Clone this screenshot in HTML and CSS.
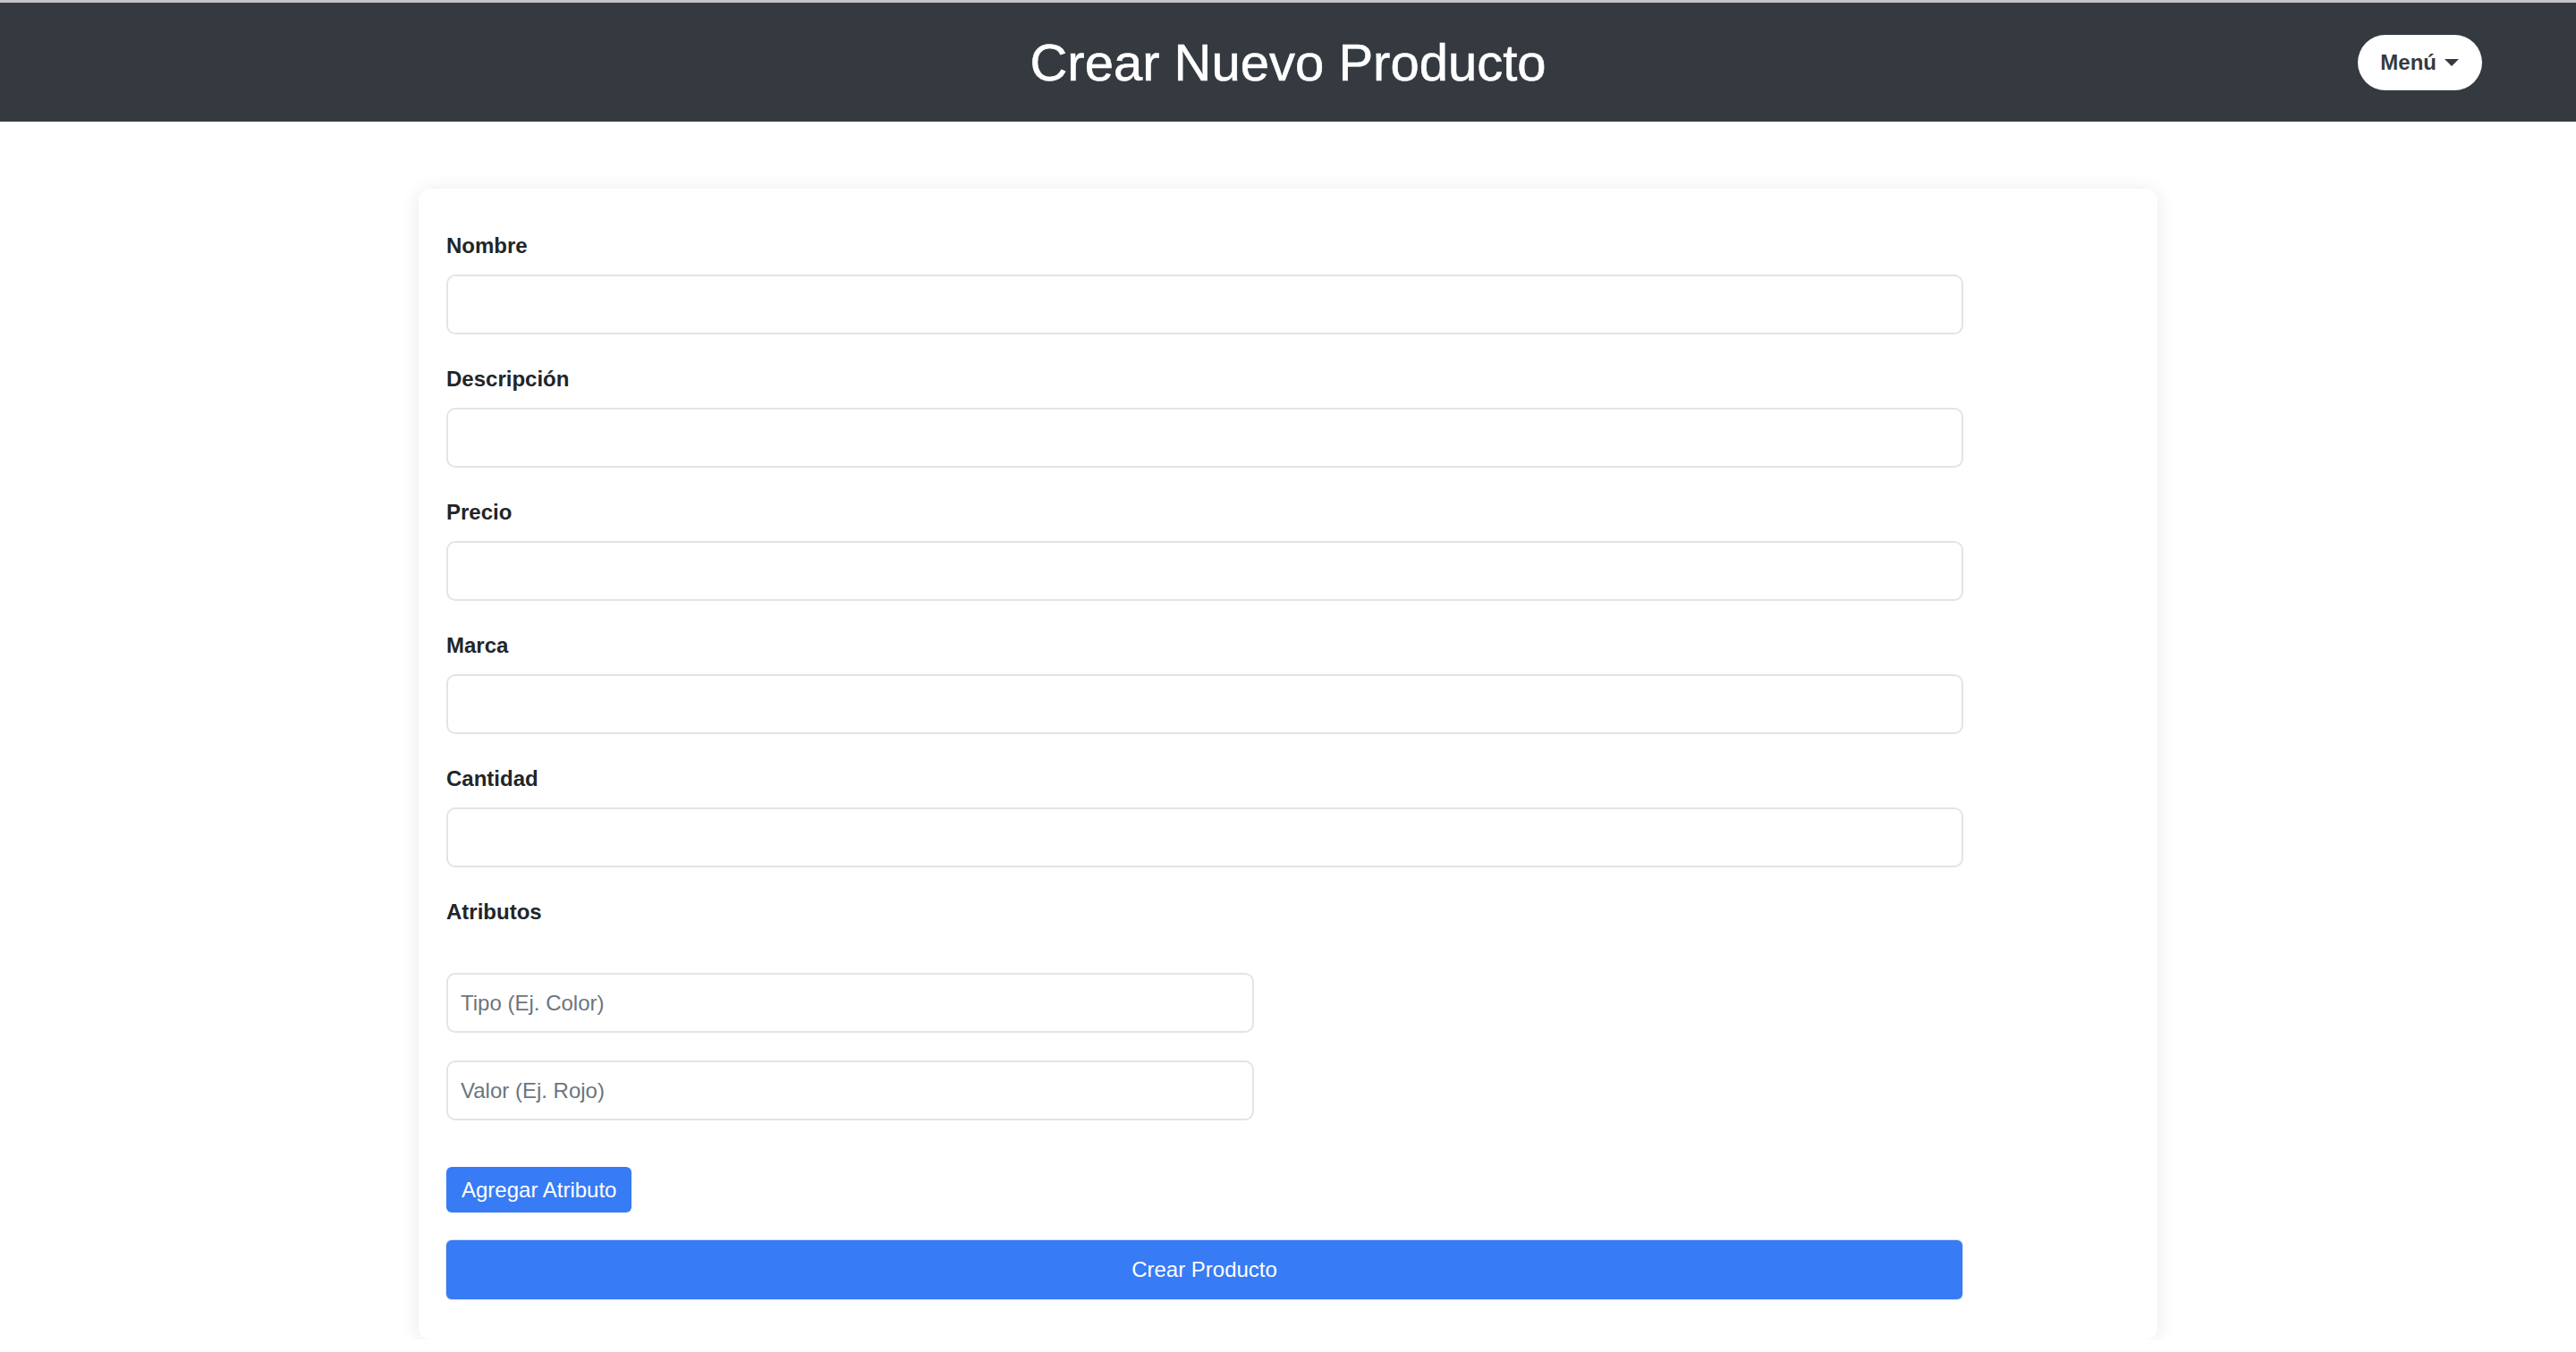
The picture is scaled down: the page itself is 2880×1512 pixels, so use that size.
FILE: index.html
```html
<!DOCTYPE html>
<html lang="es">
<head>
<meta charset="utf-8">
<title>Crear Nuevo Producto</title>
<link rel="stylesheet" href="styles.css">
</head>
<body>
<header class="topbar">
  <div class="topbar-spacer"></div>
  <h1 class="topbar-title">Crear Nuevo Producto</h1>
  <div class="topbar-actions">
    <button class="menu-btn" type="button">Menú<span class="caret"></span></button>
  </div>
</header>
<main class="page">
  <form class="card">
    <div class="form-body">
      <div class="field">
        <label class="field-label">Nombre</label>
        <input class="input" type="text">
      </div>
      <div class="field">
        <label class="field-label">Descripción</label>
        <input class="input" type="text">
      </div>
      <div class="field">
        <label class="field-label">Precio</label>
        <input class="input" type="text">
      </div>
      <div class="field">
        <label class="field-label">Marca</label>
        <input class="input" type="text">
      </div>
      <div class="field">
        <label class="field-label">Cantidad</label>
        <input class="input" type="text">
      </div>
      <div class="attrs">
        <label class="field-label attrs-label">Atributos</label>
        <div class="attr-list">
          <input class="input attr-input" type="text" placeholder="Tipo (Ej. Color)">
          <input class="input attr-input" type="text" placeholder="Valor (Ej. Rojo)">
        </div>
      </div>
      <button class="btn btn-add" type="button">Agregar Atributo</button>
      <button class="btn btn-submit" type="submit">Crear Producto</button>
    </div>
  </form>
</main>
</body>
</html>
```

FILE: styles.css
```css
* {
  box-sizing: border-box;
}

html, body {
  margin: 0;
  padding: 0;
  background: #ffffff;
}

body {
  font-family: "Liberation Sans", Arial, Helvetica, sans-serif;
  color: #212529;
}

.topbar {
  display: grid;
  grid-template-columns: 1fr auto 1fr;
  align-items: center;
  height: 136px;
  border-top: 3px solid #c6c4c9;
  background: #343a40;
}

.topbar-title {
  margin: 0;
  font-size: 58px;
  font-weight: 400;
  line-height: 1.2;
  color: #ffffff;
  white-space: nowrap;
  -webkit-text-stroke: 0.6px #ffffff;
}

.topbar-actions {
  display: flex;
  justify-content: flex-end;
  padding-right: 105px;
}

.menu-btn {
  display: flex;
  align-items: center;
  height: 62px;
  padding: 0 26px 0 25px;
  border: none;
  border-radius: 31px;
  background: #ffffff;
  color: #343a40;
  font-family: inherit;
  font-size: 24px;
  font-weight: 700;
}

.caret {
  width: 0;
  height: 0;
  margin-left: 9px;
  border-top: 8px solid #343a40;
  border-left: 8px solid transparent;
  border-right: 8px solid transparent;
}

.page {
  padding-top: 75px;
}

.card {
  width: 1944px;
  margin: 0 auto;
  padding: 46px 31px 45px;
  background: #ffffff;
  border-radius: 13px;
  box-shadow: 0 2px 22px rgba(0, 0, 0, 0.09);
}

.form-body {
  display: flex;
  flex-direction: column;
  align-items: flex-start;
  max-width: 1696px;
}

.field {
  display: flex;
  flex-direction: column;
  width: 100%;
  margin-bottom: 32px;
}

.field-label {
  display: block;
  font-size: 24px;
  line-height: 36px;
  font-weight: 700;
  color: #212529;
  margin-bottom: 14px;
}

.input {
  width: 100%;
  height: 67px;
  padding: 0 14px;
  border: 2px solid #e1e4e8;
  border-radius: 10px;
  background: #ffffff;
  font-family: inherit;
  font-size: 24px;
  color: #212529;
  outline: none;
}

.input::placeholder {
  color: #6c757d;
}

.attrs {
  display: flex;
  flex-direction: column;
  width: 100%;
}

.attrs-label {
  margin-bottom: 50px;
}

.attr-list {
  display: flex;
  flex-direction: column;
  gap: 31px;
}

.attr-input {
  width: 903px;
}

.btn {
  border: none;
  background: #377bf5;
  color: #ffffff;
  font-family: inherit;
  font-size: 24px;
  font-weight: 400;
}

.btn-add {
  height: 51px;
  margin-top: 52px;
  padding: 0 17px;
  border-radius: 6px;
}

.btn-submit {
  width: 1695px;
  height: 66px;
  margin-top: 31px;
  border-radius: 6px;
  box-shadow: 0 0 0 1px rgba(120, 130, 150, 0.25);
}
```
